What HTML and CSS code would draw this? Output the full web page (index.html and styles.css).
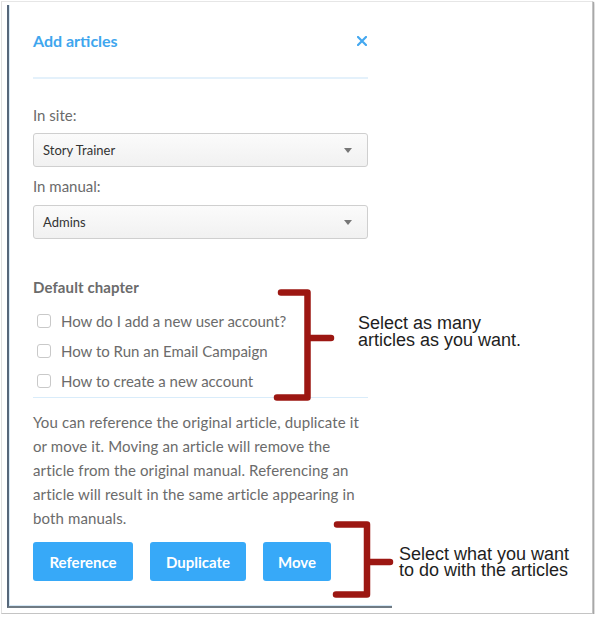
FILE: index.html
```html
<!DOCTYPE html>
<html lang="en">
<head>
<meta charset="utf-8">
<title>Add articles</title>
<link rel="stylesheet" href="styles.css">
</head>
<body>
<div class="frame">
  <section class="panel">
    <header class="panel-header">
      <h2 class="title">Add articles</h2>
      <button class="close" aria-label="Close">
        <svg width="10" height="10" viewBox="0 0 10 10"><path d="M1 1 L9 9 M9 1 L1 9" stroke="#44a8f0" stroke-width="2.2" stroke-linecap="square" fill="none"/></svg>
      </button>
    </header>

    <div class="field">
      <label class="label">In site:</label>
      <div class="select"><span>Story Trainer</span><i class="caret"></i></div>
    </div>
    <div class="field field-second">
      <label class="label">In manual:</label>
      <div class="select"><span>Admins</span><i class="caret"></i></div>
    </div>

    <h3 class="chapter">Default chapter</h3>
    <ul class="articles">
      <li><span class="box"></span>How do I add a new user account?</li>
      <li><span class="box"></span>How to Run an Email Campaign</li>
      <li><span class="box"></span>How to create a new account</li>
    </ul>

    <p class="help">You can reference the original article, duplicate it or move it. Moving an article will remove the article from the original manual. Referencing an article will result in the same article appearing in both manuals.</p>

    <div class="actions">
      <button class="btn">Reference</button>
      <button class="btn btn-dup">Duplicate</button>
      <button class="btn btn-move">Move</button>
    </div>
  </section>

  <svg class="brackets" width="591" height="612" viewBox="1 1 591 612">
    <path d="M280 291.5 H306.5 V396.5 H276 M306.5 337 H330" stroke="#9c1712" stroke-width="6.5" fill="none" stroke-linecap="round" stroke-linejoin="round"/>
    <path d="M336 523.5 H366 V593.5 H335 M366 561 H389" stroke="#9c1712" stroke-width="6.5" fill="none" stroke-linecap="round" stroke-linejoin="round"/>
  </svg>
  <div class="note note-one"><span class="note-line">Select as many</span><span class="note-line">articles as you want.</span></div>
  <div class="note note-two"><span class="note-line">Select what you want</span><span class="note-line">to do with the articles</span></div>
</div>
</body>
</html>
```

FILE: styles.css
```css
html, body {
  margin: 0;
  padding: 0;
  background: #ffffff;
}

.frame {
  position: relative;
  box-sizing: border-box;
  width: 592px;
  height: 613px;
  border-top: 1px solid #e6e6e6;
  border-left: 1px solid #e0e0e0;
  border-right: 1px solid #c4c4c4;
  border-bottom: 1px solid #c4c4c4;
  box-shadow: 1px 1px 1px #a8a8a8, 2px 2px 2px #e0e0e0;
  margin-left: 1px;
  margin-top: 1px;
  padding: 3px 0 0 5px;
  overflow: hidden;
  font-family: "Lato", "Open Sans", sans-serif;
}

.panel {
  box-sizing: border-box;
  width: 385px;
  height: 603px;
  border-left: 2px solid #56677a;
  border-bottom: 2px solid #707b84;
  box-shadow: inset 1px 0 0 #d6e9f7, inset 0 -1px 0 #d6e9f7;
  padding: 26px 24px 0 24px;
  display: flex;
  flex-direction: column;
  color: #6b6b6b;
}

.panel-header {
  display: flex;
  justify-content: space-between;
  align-items: center;
  height: 20px;
  padding-bottom: 26px;
  border-bottom: 2px solid #e4f1fb;
}

.title {
  margin: 0;
  font-size: 16px;
  line-height: 20px;
  font-weight: 700;
  color: #3ea6ee;
}

.close {
  border: 0;
  background: none;
  padding: 0;
  margin-right: 1px;
  width: 10px;
  height: 10px;
  display: flex;
}

.field {
  display: flex;
  flex-direction: column;
  margin-top: 26px;
}

.field-second {
  margin-top: 9px;
}

.label {
  font-size: 15px;
  line-height: 20px;
  color: #6b6b6b;
  margin-bottom: 8px;
}

.field-second .label {
  margin-bottom: 9px;
}

.select {
  box-sizing: border-box;
  height: 34px;
  border: 1px solid #cfcfcf;
  border-radius: 3px;
  background: linear-gradient(#fbfbfb, #f1f1f1);
  display: flex;
  align-items: center;
  justify-content: space-between;
  padding: 0 15px 0 9px;
  font-size: 13px;
  color: #333333;
}

.caret {
  width: 0;
  height: 0;
  border-left: 4.5px solid transparent;
  border-right: 4.5px solid transparent;
  border-top: 5px solid #777777;
}

.chapter {
  margin: 38px 0 0 0;
  font-size: 15px;
  line-height: 20px;
  font-weight: 700;
  color: #6b6b6b;
  letter-spacing: 0.1px;
}

.articles {
  list-style: none;
  margin: 9px 0 0 0;
  padding: 0 0 1px 0;
  border-bottom: 1px solid #d9ecfa;
}

.articles li {
  display: flex;
  align-items: center;
  height: 30px;
  font-size: 15px;
  color: #6b6b6b;
}

.box {
  box-sizing: border-box;
  width: 14px;
  height: 14px;
  border: 1px solid #c9c9c9;
  border-radius: 3px;
  background: #fff;
  margin: 0 10px 0 4px;
}

.help {
  margin: 12px 0 0 0;
  font-size: 15px;
  line-height: 24px;
  letter-spacing: 0.12px;
  color: #6b6b6b;
}

.actions {
  display: flex;
  gap: 17px;
  margin-top: 12px;
}

.btn {
  box-sizing: border-box;
  height: 39px;
  width: 100px;
  padding: 0;
  border: 0;
  border-radius: 3px;
  background: #37a9f8;
  color: #ffffff;
  font-family: "Lato", "Open Sans", sans-serif;
  font-size: 15px;
  font-weight: 700;
}

.btn-dup {
  width: 96px;
}

.btn-move {
  width: 68px;
}

.brackets {
  position: absolute;
  left: 0;
  top: 0;
  pointer-events: none;
}

.note {
  position: absolute;
  display: flex;
  flex-direction: column;
  font-family: "Liberation Sans", Arial, sans-serif;
  font-size: 18px;
  color: #1e1e1e;
  white-space: nowrap;
}

.note-line {
  display: block;
}

.note-one {
  left: 356px;
  top: 313px;
  line-height: 17px;
}

.note-two {
  left: 397px;
  top: 544px;
  line-height: 16px;
}
```
